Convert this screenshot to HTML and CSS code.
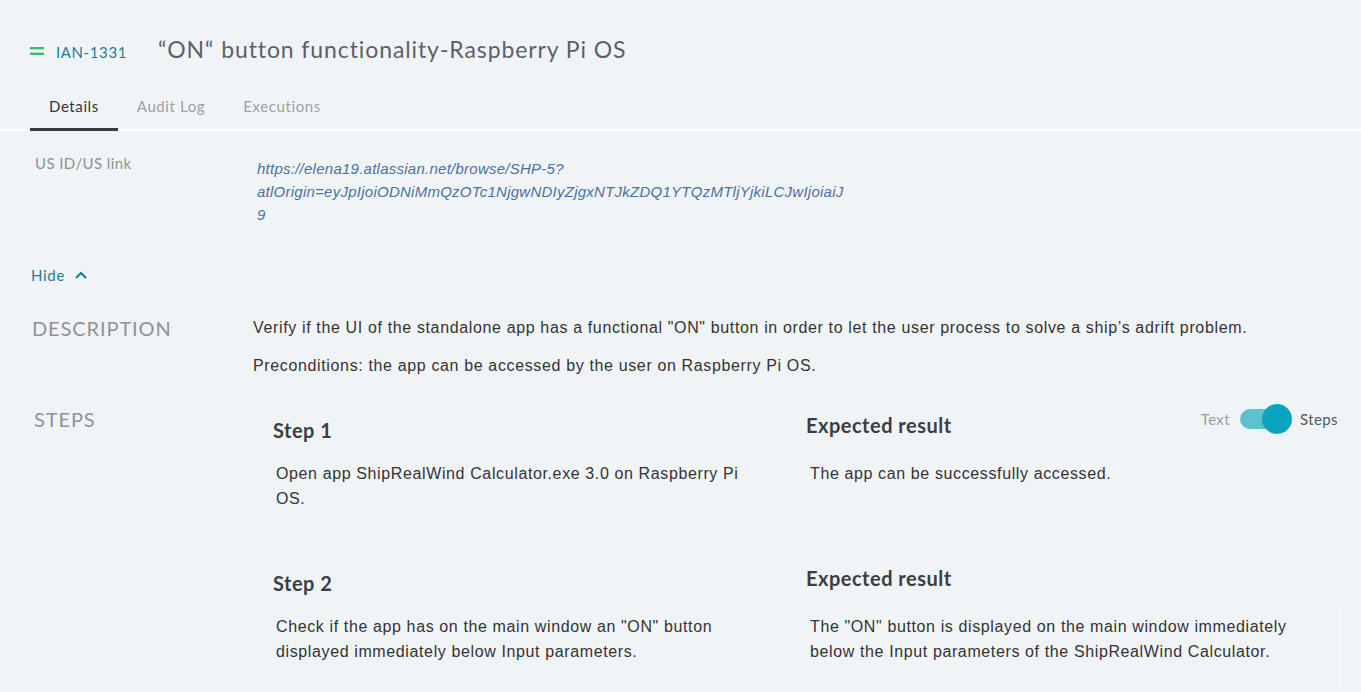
FILE: index.html
```html
<!DOCTYPE html>
<html lang="en">
<head>
<meta charset="utf-8">
<title>IAN-1331</title>
<link rel="stylesheet" href="styles.css">
</head>
<body>
<div class="page">
  <header class="header">
    <span class="issue-icon" aria-hidden="true">
      <svg width="14" height="10" viewBox="0 0 14 10"><rect x="0" y="1" width="14" height="2.4" fill="#3dbb72"/><rect x="0" y="6.6" width="14" height="2.4" fill="#3dbb72"/></svg>
    </span>
    <span class="issue-key">IAN-1331</span>
    <h1 class="title">“ON“ button functionality-Raspberry Pi OS</h1>
  </header>

  <nav class="tabs">
    <a class="tab tab-active">Details</a>
    <a class="tab">Audit Log</a>
    <a class="tab">Executions</a>
  </nav>

  <main class="details">
    <div class="field">
      <div class="field-label">US ID/US link</div>
      <div class="field-value">
        <a class="link">https://elena19.atlassian.net/browse/SHP-5?<br>atlOrigin=eyJpIjoiODNiMmQzOTc1NjgwNDIyZjgxNTJkZDQ1YTQzMTljYjkiLCJwIjoiaiJ<br>9</a>
      </div>
    </div>

    <button class="hide">Hide
      <svg width="14" height="10" viewBox="0 0 14 10"><path d="M2 8 L7 3 L12 8" fill="none" stroke="#1f7d96" stroke-width="2.2"/></svg>
    </button>

    <section class="section section-desc">
      <h2 class="section-label">DESCRIPTION</h2>
      <div class="desc-body">
        <p>Verify if the UI of the standalone app has a functional "ON" button in order to let the user process to solve a ship’s adrift problem.</p>
        <p>Preconditions: the app can be accessed by the user on Raspberry Pi OS.</p>
      </div>
    </section>

    <section class="section section-steps">
      <h2 class="section-label steps-label">STEPS</h2>
      <div class="steps-body">
        <div class="toggle">
          <span class="toggle-off">Text</span>
          <span class="switch"><span class="knob"></span></span>
          <span class="toggle-on">Steps</span>
        </div>

        <div class="step">
          <div class="step-col">
            <h3 class="step-title">Step 1</h3>
            <p class="step-text">Open app ShipRealWind Calculator.exe 3.0 on Raspberry Pi OS.</p>
          </div>
          <div class="result-col">
            <h3 class="result-title">Expected result</h3>
            <p class="result-text">The app can be successfully accessed.</p>
          </div>
        </div>

        <div class="step step-last">
          <div class="step-col">
            <h3 class="step-title">Step 2</h3>
            <p class="step-text">Check if the app has on the main window an "ON" button displayed immediately below Input parameters.</p>
          </div>
          <div class="result-col">
            <h3 class="result-title">Expected result</h3>
            <div class="result-box">
              <p class="result-text result-text-boxed">The "ON" button is displayed on the main window immediately below the Input parameters of the ShipRealWind Calculator.</p>
            </div>
          </div>
        </div>
      </div>
    </section>
  </main>
</div>
</body>
</html>
```

FILE: styles.css
```css
* { box-sizing: border-box; }

html, body {
  margin: 0;
  padding: 0;
  background: #f1f4f7;
  height: 100%;
  overflow: hidden;
}

body {
  font-family: "Lato", "Liberation Sans", sans-serif;
  color: #333;
}

.page {
  width: 1361px;
}

/* Header */
.header {
  display: flex;
  align-items: center;
  padding: 34px 0 0 30px;
  height: 64px;
}

.issue-icon {
  display: inline-flex;
  width: 14px;
  margin-top: 4px;
}

.issue-key {
  margin-left: 12px;
  font-size: 15px;
  letter-spacing: 0.6px;
  color: #1f7d96;
  margin-top: 5px;
}

.title {
  margin: 0 0 0 31px;
  font-size: 23px;
  font-weight: 400;
  letter-spacing: 0.9px;
  color: #5d6166;
  line-height: 30px;
}

/* Tabs */
.tabs {
  display: flex;
  margin-top: 21px;
  border-bottom: 2px solid #ffffff;
  padding-left: 30px;
}

.tab {
  display: block;
  padding: 11px 19px 12px;
  font-size: 15px;
  line-height: 20px;
  letter-spacing: 0.6px;
  color: #9da1a6;
  border-bottom: 3px solid transparent;
  margin-bottom: -2px;
}

.tab-active {
  color: #34373c;
  border-bottom-color: #393c43;
}

/* Details */
.details {
  padding: 21px 0 0 32px;
}

.field {
  display: grid;
  grid-template-columns: 221px 1fr;
}

.field-label {
  padding-left: 3px;
  font-size: 15px;
  line-height: 22px;
  letter-spacing: 0.4px;
  color: #8d9196;
}

.field-value {
  padding-left: 4px;
  padding-top: 5px;
}

.link {
  font-family: "Liberation Sans", Arial, sans-serif;
  font-style: italic;
  font-size: 15px;
  line-height: 23px;
  letter-spacing: 0.25px;
  color: #4b71a0;
}

.hide {
  display: flex;
  align-items: center;
  gap: 9px;
  margin: 38px 0 0 -1px;
  padding: 0;
  border: 0;
  background: none;
  font-family: "Lato", sans-serif;
  font-size: 15px;
  line-height: 22px;
  letter-spacing: 0.7px;
  color: #1f7d96;
}

.section {
  display: grid;
  grid-template-columns: 221px 1fr;
}

.section-label {
  margin: 0;
  font-size: 20px;
  font-weight: 400;
  line-height: 26px;
  color: #8f9398;
  letter-spacing: 0.9px;
}

.section-desc {
  margin-top: 28px;
}

.section-desc .section-label {
  margin-top: 1px;
}

.desc-body {
  padding-top: 2px;
}

.desc-body p {
  margin: 0 0 14px;
  font-family: "Liberation Sans", Arial, sans-serif;
  font-size: 16px;
  line-height: 24px;
  letter-spacing: 0.64px;
  color: #333;
}

.section-steps {
  margin-top: 14px;
}

.steps-label {
  padding-left: 2px;
}

.steps-body {
  position: relative;
  padding-left: 20px;
}

.toggle {
  position: absolute;
  top: -2px;
  right: 23px;
  display: flex;
  align-items: center;
  height: 30px;
  font-size: 15px;
  letter-spacing: 0.4px;
}

.toggle-off {
  color: #9a9ea3;
}

.toggle-on {
  color: #53575c;
}

.switch {
  position: relative;
  display: inline-block;
  width: 50px;
  height: 20px;
  margin: 0 10px;
  background: #5ec1d0;
  border-radius: 10px;
}

.knob {
  position: absolute;
  right: -2px;
  top: -5px;
  width: 30px;
  height: 30px;
  border-radius: 50%;
  background: #0aa4bf;
}

.step {
  display: grid;
  grid-template-columns: 533px 534px;
  margin-bottom: 48px;
}

.step-last {
  margin-bottom: 0;
}

.step-title,
.result-title {
  margin: 0;
  font-size: 20px;
  font-weight: 700;
  line-height: 26px;
  letter-spacing: 0.5px;
  color: #3b3e43;
}

.step-title {
  margin-top: 11px;
}

.result-title {
  margin-top: 6px;
}

.step-text,
.result-text {
  margin: 0;
  font-family: "Liberation Sans", Arial, sans-serif;
  font-size: 16px;
  line-height: 25px;
  letter-spacing: 0.62px;
  color: #333;
}

.step-text {
  margin-top: 18px;
  padding-left: 3px;
  max-width: 483px;
}

.result-text {
  margin-top: 23px;
  padding-left: 4px;
  max-width: 504px;
}

.result-box {
  margin-top: 16px;
  padding-top: 7px;
  height: 82px;
  border-right: 1px solid #fbfcfd;
}

.result-text-boxed {
  margin-top: 0;
}
```
